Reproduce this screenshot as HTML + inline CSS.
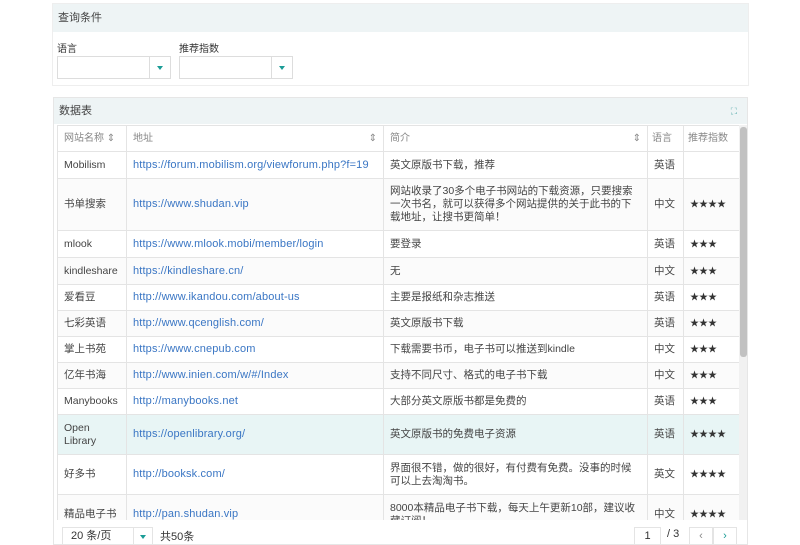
<!DOCTYPE html>
<html><head><meta charset="utf-8"><style>
*{box-sizing:border-box;margin:0;padding:0}
body{width:800px;height:545px;overflow:hidden;background:#fff;font-family:"Liberation Sans","Noto Sans CJK SC",sans-serif;font-size:10px;color:#555;position:relative}
.abs{position:absolute}
.p1{left:52px;top:3px;width:697px;height:83px;border:1px solid #eee}
.hd{background:#eef4f5;height:28px;line-height:28px;padding-left:5px;font-size:11px;color:#444}
.sel{position:absolute;top:56px;height:23px;border:1px solid #ddd;background:#fff}
.sel i{position:absolute;right:0;top:0;width:21px;height:21px;border-left:1px solid #ddd}
.sel i:after{content:"";position:absolute;left:7px;top:9px;border:3.5px solid transparent;border-top:4px solid #1a9c96}
.lbl{position:absolute;top:40px;font-size:10px;color:#333}
.p2{left:53px;top:97px;width:695px;height:448px;border:1px solid #e6e6e6;overflow:hidden}
table{border-collapse:collapse;table-layout:fixed;position:absolute;left:3px;top:27px;width:682px}
td{border:1px solid #e4e4e4;padding:0 6px;vertical-align:middle;line-height:13px;color:#444;font-size:10.5px}
td.u{font-size:11px;letter-spacing:0.15px}
thead td{height:26px;color:#888;background:#fff;font-size:10px}
td.u{color:#3a76c4}
tr.hl td{background:#e8f5f5}
tr.alt td{background:#fbfbfb}
.st{letter-spacing:0;color:#333;font-size:9px !important}
.sb{position:absolute;left:685px;top:27px;width:9px;height:420px;background:#f1f1f1}
.sb div{position:absolute;left:1px;top:2px;width:7px;height:230px;background:#c1c1c1;border-radius:3px}
.ft{position:absolute;left:0;top:422px;width:695px;height:26px;background:#fff}
.bx{position:absolute;border:1px solid #e4e4e4;height:19px;top:7px;text-align:center;line-height:17px;color:#333;font-size:11px}
</style></head><body>
<div class="abs p1"><div class="hd">查询条件</div></div>
<div class="lbl" style="left:57px">语言</div>
<div class="lbl" style="left:179px">推荐指数</div>
<div class="sel" style="left:57px;width:114px"><i></i></div>
<div class="sel" style="left:179px;width:114px"><i></i></div>

<div class="abs p2">
<div class="hd" style="height:26px;line-height:26px">数据表<span style="position:absolute;right:10px;top:0;font-size:9px;color:#5aa">⛶</span></div>
<table>
<colgroup><col style="width:69px"><col style="width:257px"><col style="width:264px"><col style="width:36px"><col style="width:56px"></colgroup>
<thead><tr><td>网站名称 ⇕</td><td>地址<span style="float:right">⇕</span></td><td>简介<span style="float:right">⇕</span></td><td style="padding:0 4px">语言</td><td style="padding:0 4px">推荐指数</td></tr></thead>
<tbody>
<tr style="height:27px"><td>Mobilism</td><td class="u">https://forum.mobilism.org/viewforum.php?f=19</td><td>英文原版书下载，推荐</td><td>英语</td><td></td></tr>
<tr style="height:52px" class="alt"><td>书单搜索</td><td class="u">https://www.shudan.vip</td><td>网站收录了30多个电子书网站的下载资源，只要搜索一次书名，就可以获得多个网站提供的关于此书的下载地址，让搜书更简单！</td><td>中文</td><td class="st">★★★★</td></tr>
<tr style="height:27px"><td>mlook</td><td class="u">https://www.mlook.mobi/member/login</td><td>要登录</td><td>英语</td><td class="st">★★★</td></tr>
<tr style="height:27px" class="alt"><td>kindleshare</td><td class="u">https://kindleshare.cn/</td><td>无</td><td>中文</td><td class="st">★★★</td></tr>
<tr style="height:26px"><td>爱看豆</td><td class="u">http://www.ikandou.com/about-us</td><td>主要是报纸和杂志推送</td><td>英语</td><td class="st">★★★</td></tr>
<tr style="height:26px" class="alt"><td>七彩英语</td><td class="u">http://www.qcenglish.com/</td><td>英文原版书下载</td><td>英语</td><td class="st">★★★</td></tr>
<tr style="height:26px"><td>掌上书苑</td><td class="u">https://www.cnepub.com</td><td>下载需要书币，电子书可以推送到kindle</td><td>中文</td><td class="st">★★★</td></tr>
<tr style="height:26px" class="alt"><td>亿年书海</td><td class="u">http://www.inien.com/w/#/Index</td><td>支持不同尺寸、格式的电子书下载</td><td>中文</td><td class="st">★★★</td></tr>
<tr style="height:26px"><td>Manybooks</td><td class="u">http://manybooks.net</td><td>大部分英文原版书都是免费的</td><td>英语</td><td class="st">★★★</td></tr>
<tr style="height:40px" class="hl"><td>Open Library</td><td class="u">https://openlibrary.org/</td><td>英文原版书的免费电子资源</td><td>英语</td><td class="st">★★★★</td></tr>
<tr style="height:40px"><td>好多书</td><td class="u">http://booksk.com/</td><td>界面很不错，做的很好，有付费有免费。没事的时候可以上去淘淘书。</td><td>英文</td><td class="st">★★★★</td></tr>
<tr style="height:40px" class="alt"><td>精品电子书</td><td class="u">http://pan.shudan.vip</td><td>8000本精品电子书下载，每天上午更新10部，建议收藏订阅！</td><td>中文</td><td class="st">★★★★</td></tr>
</tbody></table>
<div class="sb"><div></div></div>
<div class="ft">
<div class="bx" style="left:8px;width:91px;text-align:left;padding-left:8px">20 条/页<span style="position:absolute;left:70px;top:0;width:20px;border-left:1px solid #e4e4e4;height:17px"></span><span style="position:absolute;left:77px;top:7px;border:3px solid transparent;border-top:4px solid #1a9c96"></span></div>
<div style="position:absolute;left:106px;top:8px;font-size:11px;color:#333">共50条</div>
<div class="bx" style="left:580px;width:27px">1</div>
<div style="position:absolute;left:613px;top:8px;font-size:11px;color:#333">/ 3</div>
<div class="bx" style="left:635px;width:24px;color:#888">‹</div>
<div class="bx" style="left:659px;width:24px;color:#1a9c96">›</div>
</div>
</div>
</body></html>
